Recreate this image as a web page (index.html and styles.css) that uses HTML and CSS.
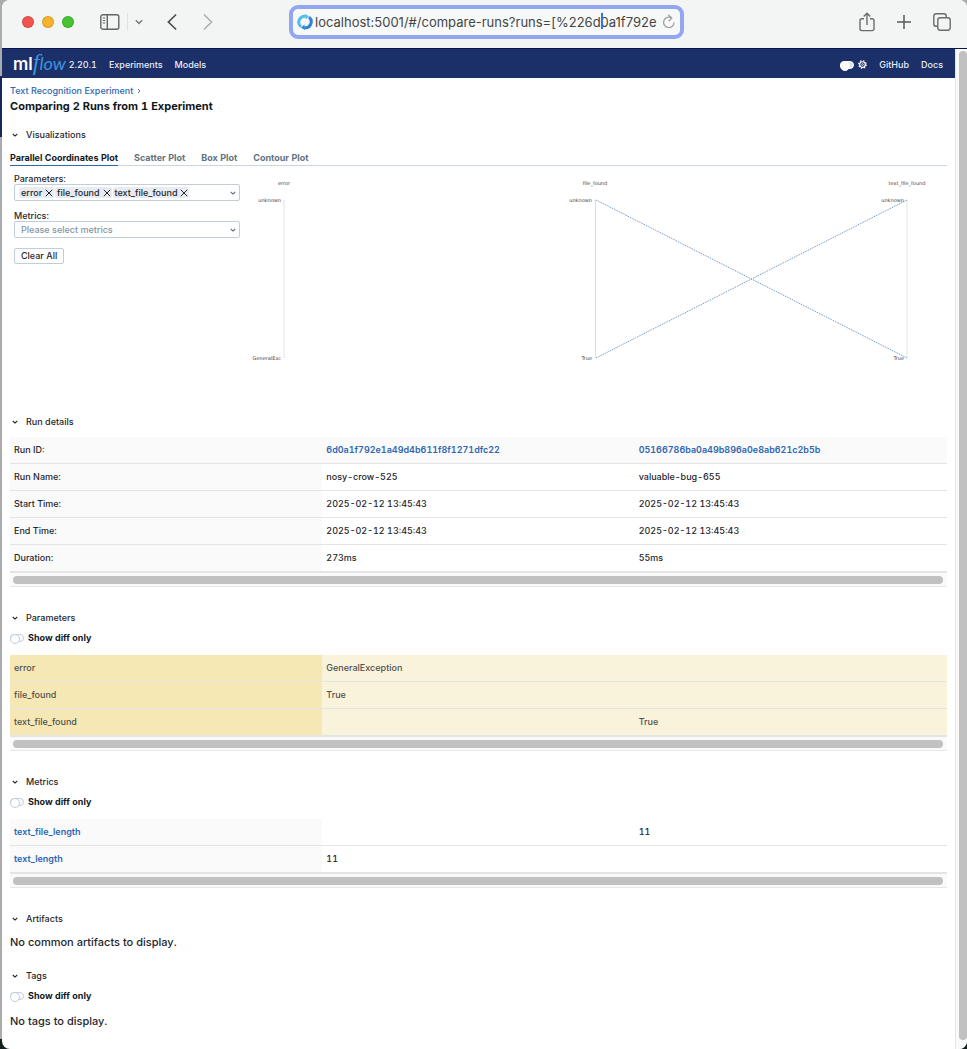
FILE: index.html
```html
<!DOCTYPE html>
<html lang="en">
<head>
<meta charset="utf-8">
<meta name="viewport" content="width=device-width, initial-scale=1">
<title>Comparing 2 Runs from 1 Experiment</title>
<link rel="stylesheet" href="styles.css">
</head>
<body>
<svg class="defs" aria-hidden="true">
  <symbol id="chevron" viewBox="0 0 8 8"><path d="M1.8 3 4 5.1 6.2 3" fill="none" stroke="currentColor" stroke-width="1.1"/></symbol>
  <symbol id="cross" viewBox="0 0 8 8"><path d="M.8.8 7.2 7.2M7.2.8.8 7.2" fill="none" stroke="currentColor" stroke-width="1"/></symbol>
</svg>
<div class="window">
  <header class="toolbar">
    <div class="toolbar-side">
      <div class="lights">
        <button class="light red" aria-label="Close"></button>
        <button class="light amber" aria-label="Minimize"></button>
        <button class="light green" aria-label="Zoom"></button>
      </div>
      <button class="tool sidebar" aria-label="Sidebar">
        <svg width="20" height="16" viewBox="0 0 20 16" fill="none" stroke="#636566" stroke-width="1.4"><rect x=".8" y=".8" width="18" height="14.4" rx="2"/><path d="M7.3 1v14"/><path d="M2.8 4h2.4M2.8 6.5h2.4M2.8 9h2.4" stroke-width="1"/></svg>
      </button>
      <button class="tool groups" aria-label="Tab groups">
        <svg width="8" height="6" viewBox="0 0 8 6" fill="none" stroke="#7b7d7e" stroke-width="1.5"><path d="M.8 1.2 4 4.4 7.2 1.2"/></svg>
      </button>
      <button class="tool back" aria-label="Back">
        <svg width="10" height="16" viewBox="0 0 10 16" fill="none" stroke="#4d4f50" stroke-width="1.7" stroke-linecap="round"><path d="M8.6 1 1.4 8l7.2 7"/></svg>
      </button>
      <button class="tool forward" aria-label="Forward">
        <svg width="10" height="16" viewBox="0 0 10 16" fill="none" stroke="#b0b2b2" stroke-width="1.7" stroke-linecap="round"><path d="m1.4 1 7.2 7-7.2 7"/></svg>
      </button>
    </div>
    <div class="address">
      <svg class="favicon" width="16" height="16" viewBox="0 0 16 16" fill="none" stroke-width="3">
        <path d="M4 12.800A6 6 0 0 1 8.500 2.200" stroke="#54bdec"/><path d="M12 3.200A6 6 0 0 1 7.500 13.800" stroke="#2f83d8"/>
        <path d="M7.800 0 12 2.200 8.600 5.600z" fill="#54bdec"/><path d="M8.200 16 4 13.800l3.400-3.400z" fill="#2f83d8"/>
      </svg>
      <span class="url-wrap">
        <input class="url" type="text" aria-label="Address" value="localhost:5001/#/compare-runs?runs=[%226d0a1f792e">
        <span class="caret"></span>
      </span>
      <button class="tool" aria-label="Reload">
        <svg width="14" height="16" viewBox="0 0 14 16" fill="none" stroke="#a0a2a3" stroke-width="1.3"><path d="M9.6 4A5.2 5.2 0 1 0 12 8.5M6.2.8 9.8 4 6.6 7.2"/></svg>
      </button>
    </div>
    <div class="toolbar-side end">
      <button class="tool" aria-label="Share">
        <svg width="16" height="20" viewBox="0 0 16 20" fill="none" stroke="#6a6c6d" stroke-width="1.4"><path d="M5 6.8H2.8A1.8 1.8 0 0 0 1 8.600v8.200a1.800 1.800 0 0 0 1.800 1.800h10.400a1.800 1.800 0 0 0 1.800-1.800V8.600a1.800 1.800 0 0 0-1.800-1.800H11M8 13V1.500M4.700 4.600 8 1.300l3.300 3.300"/></svg>
      </button>
      <button class="tool" aria-label="New tab">
        <svg width="14" height="14" viewBox="0 0 14 14" stroke="#58595a" stroke-width="1.5"><path d="M7 0v14M0 7h14"/></svg>
      </button>
      <button class="tool" aria-label="Tab overview">
        <svg width="18" height="18" viewBox="0 0 18 18" fill="none" stroke="#6a6c6d" stroke-width="1.400"><rect x="4.800" y="4.800" width="12.400" height="12.400" rx="2.400"/><path d="M4.800 13.300H3.200A2.400 2.400 0 0 1 .8 10.900V3.200A2.400 2.400 0 0 1 3.200.8h7.700a2.400 2.400 0 0 1 2.400 2.400v1.600"/></svg>
      </button>
    </div>
  </header>

  <div class="viewport">
    <div class="page">
      <nav class="navbar">
        <a class="logo" href="#" aria-label="mlflow home"><span class="logo-ml">ml</span><span class="logo-f">f</span><span class="logo-low">low</span></a>
        <span class="version">2.20.1</span>
        <a class="nav-link" href="#">Experiments</a>
        <a class="nav-link" href="#">Models</a>
        <span class="nav-tools">
          <input class="switch light-switch" type="checkbox" role="switch" aria-label="Dark mode">
          <svg width="9" height="9" viewBox="0 0 10 10" fill="none" stroke="#fff"><circle cx="5" cy="5" r="3.100" stroke-width="1.300"/><circle cx="5" cy="5" r="1" stroke-width=".8"/><circle cx="5" cy="5" r="4.200" stroke-width="1.300" stroke-dasharray="1.650 1.650"/></svg>
          <a class="nav-link" href="#">GitHub</a>
          <a class="nav-link" href="#">Docs</a>
        </span>
      </nav>

      <main class="content">
        <div class="breadcrumb"><a href="#">Text Recognition Experiment</a><svg width="8" height="8" viewBox="0 0 8 8" fill="none" stroke="#5f7281"><path d="M3 2l2 2-2 2"/></svg></div>
        <h1 class="title">Comparing 2 Runs from 1 Experiment</h1>

        <section class="section">
          <h2><button class="section-head"><svg class="chev"><use href="#chevron"/></svg>Visualizations</button></h2>
          <div class="tabs" role="tablist">
            <button class="tab active" role="tab" aria-selected="true">Parallel Coordinates Plot</button>
            <button class="tab" role="tab">Scatter Plot</button>
            <button class="tab" role="tab">Box Plot</button>
            <button class="tab" role="tab">Contour Plot</button>
          </div>
          <div class="plot">
            <div class="controls">
              <span class="label" id="params-label">Parameters:</span>
              <div class="field" role="group" aria-labelledby="params-label">
                <span class="tag">error<button class="remove" aria-label="Remove error"><svg><use href="#cross"/></svg></button></span>
                <span class="tag">file_found<button class="remove" aria-label="Remove file_found"><svg><use href="#cross"/></svg></button></span>
                <span class="tag">text_file_found<button class="remove" aria-label="Remove text_file_found"><svg><use href="#cross"/></svg></button></span>
                <svg class="chev field-chev"><use href="#chevron"/></svg>
              </div>
              <label class="label" for="metrics">Metrics:</label>
              <div class="field">
                <select class="select" id="metrics"><option>Please select metrics</option></select>
                <svg class="chev field-chev"><use href="#chevron"/></svg>
              </div>
              <button class="clear">Clear All</button>
            </div>
            <svg class="chart" viewBox="0 0 707 232" role="img" aria-label="Parallel coordinates plot">
              <g stroke="#ededed" stroke-width="1.500"><path d="M44 33v158M667 33v158"/><path d="M355.500 33v158" stroke="#dcdcdc" stroke-width="1"/></g>
              <path d="M356 33 667 191M356 191 667 33" stroke="#5a88bd" stroke-width="1" stroke-dasharray="1 1" fill="none"/>
              <g class="chart-text" text-anchor="middle"><text x="44" y="18">error</text><text x="355" y="18">file_found</text><text x="667" y="18">text_file_found</text></g>
              <g class="chart-text" text-anchor="end"><text x="41" y="35">unknown</text><text x="352" y="35">unknown</text><text x="664" y="35">unknown</text><text x="41" y="193">GeneralExc</text><text x="352" y="193">True</text><text x="664" y="193">True</text></g>
            </svg>
          </div>
        </section>

        <section class="section">
          <h2><button class="section-head"><svg class="chev"><use href="#chevron"/></svg>Run details</button></h2>
          <div class="table-box details">
            <table>
              <tr class="shaded"><th scope="row">Run ID:</th><td><a href="#">6d0a1f792e1a49d4b611f8f1271dfc22</a></td><td><a href="#">05166786ba0a49b896a0e8ab621c2b5b</a></td></tr>
              <tr><th scope="row">Run Name:</th><td>nosy-crow-525</td><td>valuable-bug-655</td></tr>
              <tr><th scope="row">Start Time:</th><td>2025-02-12 13:45:43</td><td>2025-02-12 13:45:43</td></tr>
              <tr><th scope="row">End Time:</th><td>2025-02-12 13:45:43</td><td>2025-02-12 13:45:43</td></tr>
              <tr><th scope="row">Duration:</th><td>273ms</td><td>55ms</td></tr>
            </table>
            <div class="hscroll"></div>
          </div>
        </section>

        <section class="section">
          <h2><button class="section-head"><svg class="chev"><use href="#chevron"/></svg>Parameters</button></h2>
          <label class="diff"><input class="switch" type="checkbox" role="switch">Show diff only</label>
          <div class="table-box">
            <table class="differs">
              <tr><th scope="row">error</th><td>GeneralException</td><td></td></tr>
              <tr><th scope="row">file_found</th><td>True</td><td></td></tr>
              <tr><th scope="row">text_file_found</th><td></td><td>True</td></tr>
            </table>
            <div class="hscroll"></div>
          </div>
        </section>

        <section class="section">
          <h2><button class="section-head"><svg class="chev"><use href="#chevron"/></svg>Metrics</button></h2>
          <label class="diff"><input class="switch" type="checkbox" role="switch">Show diff only</label>
          <div class="table-box">
            <table>
              <tr><th scope="row"><a href="#">text_file_length</a></th><td></td><td>11</td></tr>
              <tr><th scope="row"><a href="#">text_length</a></th><td>11</td><td></td></tr>
            </table>
            <div class="hscroll"></div>
          </div>
        </section>

        <section class="section compact">
          <h2><button class="section-head"><svg class="chev"><use href="#chevron"/></svg>Artifacts</button></h2>
          <p class="empty">No common artifacts to display.</p>
        </section>

        <section class="section last">
          <h2><button class="section-head"><svg class="chev"><use href="#chevron"/></svg>Tags</button></h2>
          <label class="diff"><input class="switch" type="checkbox" role="switch">Show diff only</label>
          <p class="empty">No tags to display.</p>
        </section>
      </main>
    </div>
    <div class="vscroll"></div>
  </div>
</div>
</body>
</html>
```
FILE: styles.css
```css
* { box-sizing: border-box; }
body {
  margin: 0;
  background: linear-gradient(#a9abac 0 76px, #17265c 76px 137px, #a9abac 137px calc(100vh - 10px), #14201f calc(100vh - 10px));
  color: #1f272d;
  font: 9px/12px Inter, "Liberation Sans", sans-serif;
  font-variant-numeric: tabular-nums;
}
button, input, select { font: inherit; color: inherit; }
button { background: none; border: 0; padding: 0; }
a { color: #2e67b1; text-decoration: none; }
h1, h2, p { margin: 0; font: inherit; }
svg { display: block; flex: none; }
.defs { position: absolute; width: 0; height: 0; }

.window {
  display: flex;
  flex-direction: column;
  min-height: 100vh;
  margin-left: 2px;
  background: #fff;
  border-radius: 8px;
  overflow: hidden;
}

/* Browser toolbar */
.toolbar {
  display: flex;
  align-items: center;
  height: 49px;
  padding: 0 16px 5px 20px;
  background: #f3f5f4;
  border-bottom: 1px solid #0a154c;
}
.toolbar-side { display: flex; flex: 1; align-items: center; }
.end { justify-content: flex-end; gap: 22px; }
.lights { display: flex; gap: 8px; }
.light { width: 12px; height: 12px; border-radius: 50%; border: 1px solid #0002; }
.red { background: #f2544d; }
.amber { background: #f6b32c; }
.green { background: #46c232; }
.tool { display: flex; align-items: center; justify-content: center; }
.sidebar { margin-left: 26px; }
.groups { height: 18px; margin-left: 7px; padding-left: 7px; border-left: 1px solid #e0e2e2; }
.back { margin-left: 24px; }
.forward { margin-left: 26px; }
.address {
  display: flex;
  align-items: center;
  flex: 0 1 395px;
  height: 34px;
  padding: 0 4px;
  background: #f7f9f8;
  border: 4px solid #93a6f2;
  border-radius: 9px;
}
.url-wrap { position: relative; flex: 1; margin-left: 2px; }
.url {
  display: block;
  width: 100%;
  padding: 0;
  border: 0;
  outline: 0;
  background: none;
  color: #434546;
  font-size: 13px;
  line-height: 20px;
  font-variant-numeric: normal;
}
.caret { position: absolute; left: 286px; top: 1px; width: 2px; height: 16px; background: #3b6df0; }

.viewport { display: flex; flex: 1; }
.page { flex: 1; min-width: 0; }
.vscroll { width: 12px; padding: 2px 0 9px 3px; background: #fafafa; border-left: 1px solid #e6e6e6; display: flex; }
.vscroll::before { content: ""; flex: 1; background: #c1c1c1; border-radius: 4px; }

/* Application bar */
.navbar {
  display: flex;
  align-items: center;
  height: 29px;
  padding: 2px 12px 0 11px;
  background: #1b2f69;
}
.navbar .nav-link, .version { color: #e8edf5; font-weight: 500; }
.logo { display: flex; align-items: baseline; height: 29px; line-height: 24px; }
.logo-ml { color: #fff; font-size: 17px; font-weight: 600; }
.logo-f { color: #3e94dc; font: italic 24px/24px "Liberation Serif", serif; }
.logo-low { color: #3e94dc; font: italic 18px/24px Lato, sans-serif; }
.version { margin: 0 12px 0 3px; }
.nav-link { margin-right: 12px; }
.nav-tools { display: flex; align-items: center; margin-left: auto; }
.nav-tools svg { margin: 0 12px 0 4px; }
.nav-tools .nav-link:last-child { margin-right: 0; }

.switch {
  appearance: none;
  flex: none;
  display: flex;
  width: 14px;
  height: 8px;
  margin: 0;
  border: 1px solid #c0cddb;
  border-radius: 4px;
  background: #fff;
}
.switch::before {
  content: "";
  flex: none;
  width: 8px;
  height: 8px;
  margin: -1px;
  border: 1px solid #c0cddb;
  border-radius: 50%;
  background: #fff;
}
.light-switch { background: #dde3ec; border-color: #fff; }
.light-switch::before { border-color: #fff; }

/* Page content */
.content { padding: 6px 8px; }
.breadcrumb { display: flex; align-items: center; gap: 2px; height: 14px; font-weight: 500; }
.title { font-size: 11px; line-height: 16px; font-weight: 700; color: #11171c; margin-bottom: 11px; }
.section { margin-bottom: 21px; }
.section.compact { margin-bottom: 14px; }
.section.last { margin-bottom: 0; }
.section-head { display: flex; align-items: center; height: 20px; padding-left: 1px; font-weight: 500; }
.chev { width: 8px; height: 8px; margin-right: 7px; }
.tabs { display: flex; gap: 16px; margin-top: 5px; border-bottom: 1px solid #cbd5e0; }
.tab { height: 16px; margin-bottom: -1px; border-bottom: 1px solid transparent; color: #5f7281; font-weight: 700; }
.tab.active { color: #11171c; border-color: #2e67b1; }
.plot { display: flex; margin-bottom: -8px; }
.controls { flex: none; width: 230px; padding: 7px 0 0 4px; font-weight: 500; }
.label { display: block; height: 11px; }
.field {
  position: relative;
  display: flex;
  align-items: center;
  gap: 1px;
  height: 17px;
  margin-bottom: 9px;
  padding-left: 4px;
  border: 1px solid #c0cddb;
  border-radius: 2px;
}
.tag { display: flex; align-items: center; gap: 3px; height: 11px; padding: 0 1px 0 2px; background: #e8ecf0; border-radius: 2px; }
.remove svg { width: 8px; height: 8px; }
.select { appearance: none; width: 100%; padding: 0 2px; border: 0; background: none; color: #8396a5; }
.field-chev { position: absolute; right: 2px; margin: 0; color: #5f7281; }
.clear { height: 16px; margin-top: 1px; padding: 0 6px; border: 1px solid #c0cddb; border-radius: 2px; }
.chart { flex: 1; min-width: 0; height: auto; align-self: flex-start; margin-top: 1px; }
.chart-text { font: 5px "DejaVu Sans", sans-serif; fill: #444; }

.details { margin-top: 5px; }
.diff { display: flex; align-items: center; gap: 4px; height: 20px; font-weight: 700; color: #11171c; }
.diff + .table-box { margin-top: 7px; }
table { width: 100%; table-layout: fixed; border-collapse: separate; border-spacing: 0; }
th, td { height: 27px; padding: 0 4px; text-align: left; font-weight: 500; border-bottom: 1px solid #e4e4e4; }
th, .shaded td { background: #fafafa; }
table a { font-weight: 600; }
.differs { color: #505050; }
.differs th { background: #f5e8b5; }
.differs td { background: #faf3db; }
.hscroll { height: 15px; padding: 3px 4px 3px 3px; background: #fafafa; border-top: 1px solid #e4e4e4; border-bottom: 1px solid #e8e8e8; }
.hscroll::before { content: ""; display: block; height: 8px; background: #c1c1c1; border-radius: 4px; }
.empty { padding-top: 3px; font-size: 11px; line-height: 20px; font-weight: 500; }
.diff + .empty { padding-top: 5px; }
```
